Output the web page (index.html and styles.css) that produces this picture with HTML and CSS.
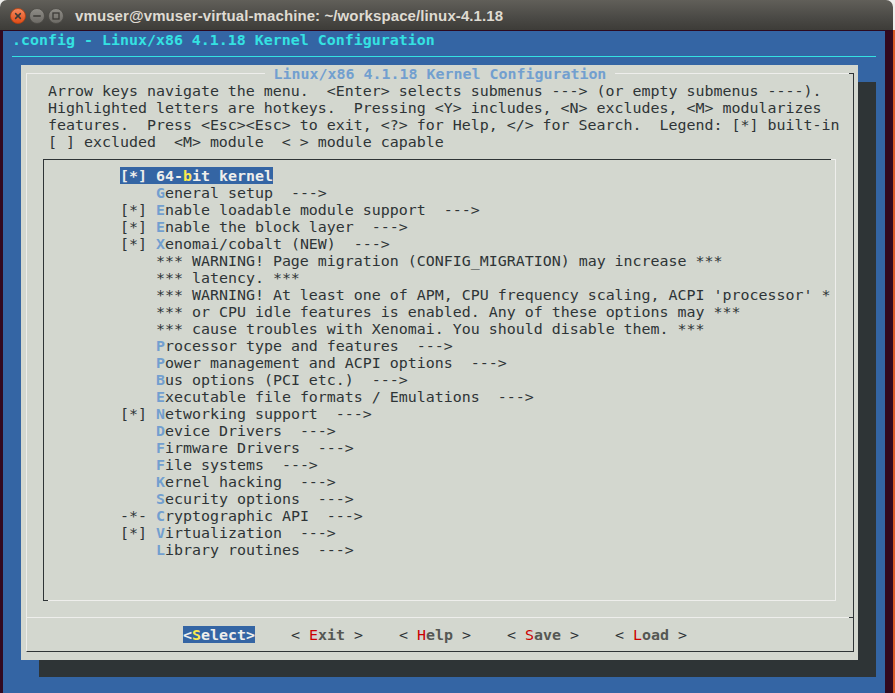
FILE: index.html
```html
<!DOCTYPE html>
<html lang="en">
<head>
    <meta charset="UTF-8">
    <title>linux-4.1.18 menuconfig</title>

    <link rel="stylesheet" href="styles.css">
</head>
<body>

    <div class="window">

        <div class="titlebar">
            <div class="controls">
                <svg class="ctl" width="16" height="16" viewBox="0 0 16 16">
                    <defs>
                        <linearGradient id="closeGrad" x1="0" y1="0" x2="0" y2="1">
                            <stop offset="0" stop-color="#f58a5f"/>
                            <stop offset="1" stop-color="#df4b16"/>
                        </linearGradient>
                    </defs>
                    <circle cx="8" cy="8" r="7.5" fill="url(#closeGrad)" stroke="#b8400f" stroke-width="0.8"/>
                    <path d="M5.6 5.6 L10.4 10.4 M10.4 5.6 L5.6 10.4" stroke="#3c3b37" stroke-width="1.5" stroke-linecap="round"/>
                </svg>
                <svg class="ctl" width="16" height="16" viewBox="0 0 16 16">
                    <defs>
                        <linearGradient id="grayGrad" x1="0" y1="0" x2="0" y2="1">
                            <stop offset="0" stop-color="#8f8d87"/>
                            <stop offset="1" stop-color="#6c6a65"/>
                        </linearGradient>
                    </defs>
                    <circle cx="8" cy="8" r="7.5" fill="url(#grayGrad)" stroke="#4a4944" stroke-width="0.8"/>
                    <path d="M4.8 8 L11.2 8" stroke="#3c3b37" stroke-width="1.6" stroke-linecap="round"/>
                </svg>
                <svg class="ctl" width="16" height="16" viewBox="0 0 16 16">
                    <circle cx="8" cy="8" r="7.5" fill="url(#grayGrad)" stroke="#4a4944" stroke-width="0.8"/>
                    <rect x="5" y="5" width="6" height="6" fill="none" stroke="#3c3b37" stroke-width="1.3"/>
                </svg>
            </div>
            <div class="wintitle">vmuser@vmuser-virtual-machine: ~/workspace/linux-4.1.18</div>
        </div>

        <div class="winbody">
            <div class="term">
                <div class="backtitle">.config - Linux/x86 4.1.18 Kernel Configuration</div>
                <div class="rule"></div>

                <div class="dialog">
                    <div class="frame">
                        <div class="title-row">
                            <span class="title"> Linux/x86 4.1.18 Kernel Configuration </span>
                        </div>

                        <div class="help">
                            <div class="line">Arrow keys navigate the menu.  &lt;Enter&gt; selects submenus ---&gt; (or empty submenus ----).</div>
                            <div class="line">Highlighted letters are hotkeys.  Pressing &lt;Y&gt; includes, &lt;N&gt; excludes, &lt;M&gt; modularizes</div>
                            <div class="line">features.  Press &lt;Esc&gt;&lt;Esc&gt; to exit, &lt;?&gt; for Help, &lt;/&gt; for Search.  Legend: [*] built-in</div>
                            <div class="line">[ ] excluded  &lt;M&gt; module  &lt; &gt; module capable</div>
                        </div>

                        <div class="menubox">
                            <div class="item selected"><span class="sel">[*] 64-<span class="key-sel">b</span>it kernel</span></div>
                            <div class="item">    <span class="key">G</span>eneral setup  ---&gt;</div>
                            <div class="item">[*] <span class="key">E</span>nable loadable module support  ---&gt;</div>
                            <div class="item">[*] <span class="key">E</span>nable the block layer  ---&gt;</div>
                            <div class="item">[*] <span class="key">X</span>enomai/cobalt (NEW)  ---&gt;</div>
                            <div class="item">    *** WARNING! Page migration (CONFIG_MIGRATION) may increase ***</div>
                            <div class="item">    *** latency. ***</div>
                            <div class="item">    *** WARNING! At least one of APM, CPU frequency scaling, ACPI 'processor' *</div>
                            <div class="item">    *** or CPU idle features is enabled. Any of these options may ***</div>
                            <div class="item">    *** cause troubles with Xenomai. You should disable them. ***</div>
                            <div class="item">    <span class="key">P</span>rocessor type and features  ---&gt;</div>
                            <div class="item">    <span class="key">P</span>ower management and ACPI options  ---&gt;</div>
                            <div class="item">    <span class="key">B</span>us options (PCI etc.)  ---&gt;</div>
                            <div class="item">    <span class="key">E</span>xecutable file formats / Emulations  ---&gt;</div>
                            <div class="item">[*] <span class="key">N</span>etworking support  ---&gt;</div>
                            <div class="item">    <span class="key">D</span>evice Drivers  ---&gt;</div>
                            <div class="item">    <span class="key">F</span>irmware Drivers  ---&gt;</div>
                            <div class="item">    <span class="key">F</span>ile systems  ---&gt;</div>
                            <div class="item">    <span class="key">K</span>ernel hacking  ---&gt;</div>
                            <div class="item">    <span class="key">S</span>ecurity options  ---&gt;</div>
                            <div class="item">-*- <span class="key">C</span>ryptographic API  ---&gt;</div>
                            <div class="item">[*] <span class="key">V</span>irtualization  ---&gt;</div>
                            <div class="item">    <span class="key">L</span>ibrary routines  ---&gt;</div>
                        </div>

                        <div class="sep"></div>

                        <div class="buttons">
                            <span class="btn active">&lt;<span class="bkey-active">S</span>elect&gt;</span>
                            <span class="btn">&lt; <span class="bkey">E</span><span class="blabel">xit</span> &gt;</span>
                            <span class="btn">&lt; <span class="bkey">H</span><span class="blabel">elp</span> &gt;</span>
                            <span class="btn">&lt; <span class="bkey">S</span><span class="blabel">ave</span> &gt;</span>
                            <span class="btn">&lt; <span class="bkey">L</span><span class="blabel">oad</span> &gt;</span>
                        </div>
                    </div>
                </div>
            </div>
        </div>

    </div>

</body>
</html>
```

FILE: styles.css
```css
html, body{
    height: 100%;
}

body{
    margin: 0;
    overflow: hidden;
    background: linear-gradient(to bottom, #efeeec 0, #efeeec 30px, #dc5a26 30px);
}

.window{
    width: 893px;
    height: 100%;
    display: flex;
    flex-direction: column;
}

/* window chrome */
.titlebar{
    flex: 0 0 30px;
    display: flex;
    align-items: center;
    border-radius: 7px 7px 0 0;
    background: linear-gradient(to bottom, #615f59, #4a4945 60%, #3d3c38);
}

.controls{
    display: flex;
    gap: 3px;
    margin-left: 10px;
    margin-top: 1px;
}

.ctl{
    display: block;
}

.wintitle{
    margin-left: 11px;
    margin-top: 1px;
    color: #dfdbd2;
    font-family: "Liberation Sans", Arial, sans-serif;
    font-weight: bold;
    font-size: 15px;
    letter-spacing: 0.1px;
}

.winbody{
    flex: 1;
    display: flex;
    min-height: 0;
    border-top: 1px solid #2c0a1f;
    background: #32091f;
    padding-left: 3px;
    padding-right: 8px;
}

/* terminal: one cell is 9px x 17px */
.term{
    width: 882px;
    background: #3465a4;
    overflow: hidden;
    font-family: "DejaVu Sans Mono", monospace;
    font-size: 14.95px;
    line-height: 17px;
    color: #2e3436;
}

.backtitle{
    height: 16px;
    padding: 1px 0 0 9px;
    white-space: pre;
    color: #34e2e2;
    font-weight: bold;
}

.rule{
    height: 1px;
    width: 864px;
    margin: 8px 0 8px 9px;
    background: #34e2e2;
}

.dialog{
    width: 837px;
    height: 595px;
    margin-left: 18px;
    padding: 8px 4px 8px 5px;
    box-sizing: border-box;
    background: #d3d7cf;
    box-shadow: 18px 17px 0 #2e3436;
}

.frame{
    height: 100%;
    box-sizing: border-box;
    display: flex;
    flex-direction: column;
    border-top: 1px solid #eeeeec;
    border-left: 1px solid #eeeeec;
    border-right: 1px solid #2e3436;
    border-bottom: 1px solid #2e3436;
    position: relative;
}

.frame::after{
    content: '';
    position: absolute;
    top: -1px;
    right: -1px;
    width: 5px;
    height: 1px;
    background: #2e3436;
}

.title-row{
    height: 17px;
    margin-top: -9px;
    display: flex;
    align-items: flex-start;
    justify-content: center;
}

.title{
    height: 16px;
    padding-top: 1px;
    white-space: pre;
    background: #d3d7cf;
    color: #729fcf;
    font-weight: bold;
}

.help{
    padding-left: 21px;
}

.line{
    height: 16px;
    padding-top: 1px;
    white-space: pre;
}

.menubox{
    position: relative;
    width: 793px;
    height: 442px;
    margin: 9px 0 0 16px;
    padding: 7px 0 0 76px;
    box-sizing: border-box;
    border-top: 1px solid #2e3436;
    border-left: 1px solid #2e3436;
    border-right: 1px solid #eeeeec;
    border-bottom: 1px solid #eeeeec;
}

.menubox::before{
    content: '';
    position: absolute;
    left: -1px;
    bottom: -1px;
    width: 5px;
    height: 1px;
    background: #2e3436;
}

.menubox::after{
    content: '';
    position: absolute;
    right: -1px;
    top: -1px;
    width: 5px;
    height: 1px;
    background: #eeeeec;
}

.item{
    height: 16px;
    padding-top: 1px;
    white-space: pre;
}

.item.selected{
    height: 17px;
    padding-top: 0;
}

.key{
    color: #729fcf;
    font-weight: bold;
}

.sel{
    display: inline-block;
    vertical-align: top;
    height: 16px;
    padding-top: 1px;
    background: #3465a4;
    color: #eeeeec;
    font-weight: bold;
}

.key-sel{
    color: #fce94f;
}

.sep{
    position: relative;
    height: 1px;
    margin-top: 16px;
    background: #eeeeec;
}

.sep::after{
    content: '';
    position: absolute;
    right: 0;
    top: 0;
    width: 4px;
    height: 1px;
    background: #2e3436;
}

.buttons{
    display: flex;
    align-items: flex-start;
    gap: 36px;
    height: 17px;
    margin-top: 8px;
    padding-left: 156px;
}

.btn{
    white-space: pre;
    height: 16px;
    padding-top: 1px;
    color: #2e3436;
}

.btn.active{
    background: #3465a4;
    color: #eeeeec;
    font-weight: bold;
}

.bkey-active{
    color: #fce94f;
}

.bkey{
    color: #cc0000;
}

.blabel{
    color: #555753;
    font-weight: bold;
}
```
